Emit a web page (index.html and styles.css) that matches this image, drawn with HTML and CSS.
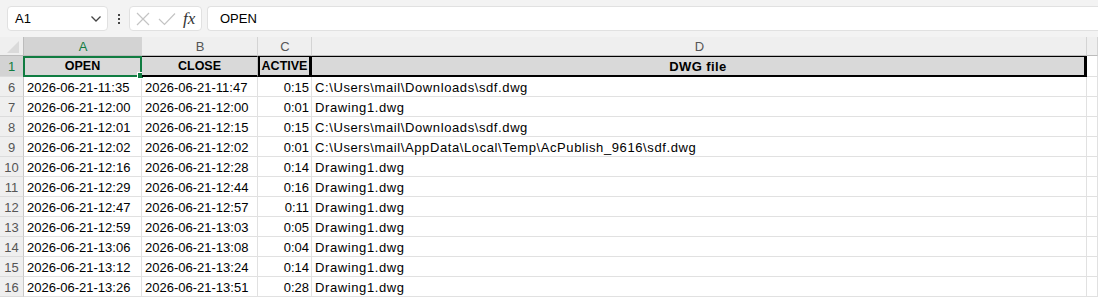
FILE: index.html
```html
<!DOCTYPE html>
<html lang="en">
<head>
    <meta charset="UTF-8">
    <title>Drawing log</title>
    <link rel="stylesheet" href="styles.css">
</head>
<body>

<div class="formula-bar">
    <div class="name-box">
        <span>A1</span>
        <svg width="12" height="8" viewBox="0 0 12 8"><path d="M1.5 1.5 L6 6 L10.5 1.5" fill="none" stroke="#444" stroke-width="1.3"/></svg>
    </div>
    <div class="dots"><i></i><i></i><i></i></div>
    <div class="fx-box">
        <svg width="16" height="16" viewBox="0 0 16 16"><path d="M2 2 L14 14 M14 2 L2 14" stroke="#c4c4c4" stroke-width="1.2"/></svg>
        <svg width="18" height="16" viewBox="0 0 18 16"><path d="M1 8 L6.5 13.5 L17 2.5" fill="none" stroke="#c4c4c4" stroke-width="1.2"/></svg>
        <span class="fx">fx</span>
    </div>
    <div class="formula-input">OPEN</div>
</div>

<div class="sheet">
    <div class="row col-head">
        <div class="corner">
            <svg width="12" height="12" viewBox="0 0 12 12"><path d="M12 0 L12 12 L0 12 Z" fill="#dadada"/></svg>
        </div>
        <div class="active-col">A</div>
        <div>B</div>
        <div>C</div>
        <div>D</div>
        <div></div>
    </div>

    <div class="row title-row">
        <div class="rh active-row">1</div>
        <div class="title a1">OPEN<span class="handle"></span></div>
        <div class="title">CLOSE</div>
        <div class="title thick">ACTIVE</div>
        <div class="title thick-r path">DWG file</div>
        <div></div>
    </div>

    <div class="row"><div class="rh">6</div><div>2026-06-21-11:35</div><div>2026-06-21-11:47</div><div class="num">0:15</div><div class="path">C:\Users\mail\Downloads\sdf.dwg</div><div></div></div>
    <div class="row"><div class="rh">7</div><div>2026-06-21-12:00</div><div>2026-06-21-12:00</div><div class="num">0:01</div><div class="path">Drawing1.dwg</div><div></div></div>
    <div class="row"><div class="rh">8</div><div>2026-06-21-12:01</div><div>2026-06-21-12:15</div><div class="num">0:15</div><div class="path">C:\Users\mail\Downloads\sdf.dwg</div><div></div></div>
    <div class="row"><div class="rh">9</div><div>2026-06-21-12:02</div><div>2026-06-21-12:02</div><div class="num">0:01</div><div class="path">C:\Users\mail\AppData\Local\Temp\AcPublish_9616\sdf.dwg</div><div></div></div>
    <div class="row"><div class="rh">10</div><div>2026-06-21-12:16</div><div>2026-06-21-12:28</div><div class="num">0:14</div><div class="path">Drawing1.dwg</div><div></div></div>
    <div class="row"><div class="rh">11</div><div>2026-06-21-12:29</div><div>2026-06-21-12:44</div><div class="num">0:16</div><div class="path">Drawing1.dwg</div><div></div></div>
    <div class="row"><div class="rh">12</div><div>2026-06-21-12:47</div><div>2026-06-21-12:57</div><div class="num">0:11</div><div class="path">Drawing1.dwg</div><div></div></div>
    <div class="row"><div class="rh">13</div><div>2026-06-21-12:59</div><div>2026-06-21-13:03</div><div class="num">0:05</div><div class="path">Drawing1.dwg</div><div></div></div>
    <div class="row"><div class="rh">14</div><div>2026-06-21-13:06</div><div>2026-06-21-13:08</div><div class="num">0:04</div><div class="path">Drawing1.dwg</div><div></div></div>
    <div class="row"><div class="rh">15</div><div>2026-06-21-13:12</div><div>2026-06-21-13:24</div><div class="num">0:14</div><div class="path">Drawing1.dwg</div><div></div></div>
    <div class="row"><div class="rh">16</div><div>2026-06-21-13:26</div><div>2026-06-21-13:51</div><div class="num">0:28</div><div class="path">Drawing1.dwg</div><div></div></div>
</div>

</body>
</html>
```

FILE: styles.css
```css
body {
    margin: 0;
    background-color: #fff;
    font-family: "Liberation Sans", Arial, sans-serif;
    font-size: 13px;
    color: #000;
    overflow: hidden;
}
.formula-bar {
    display: flex;
    align-items: center;
    height: 37px;
    padding: 0 0 0 7px;
    box-sizing: border-box;
    background-color: #f3f3f3;
}
.name-box {
    display: flex;
    align-items: center;
    justify-content: space-between;
    width: 101px;
    height: 25px;
    box-sizing: border-box;
    padding: 0 5px 0 7px;
    background-color: #fff;
    border: 1px solid #e1e1e1;
    border-radius: 4px;
    font-size: 13px;
}
.dots {
    display: flex;
    flex-direction: column;
    gap: 2px;
    width: 21px;
    align-items: center;
}
.dots i {
    width: 2px;
    height: 2px;
    background-color: #444;
}
.fx-box {
    display: flex;
    align-items: center;
    gap: 7px;
    width: 73px;
    height: 25px;
    box-sizing: border-box;
    padding: 0 0 0 5px;
    background-color: #fff;
    border: 1px solid #e1e1e1;
    border-radius: 4px;
}
.fx {
    font-family: "Liberation Serif", "Times New Roman", serif;
    font-style: italic;
    font-size: 17px;
    color: #333;
}
.formula-input {
    flex: 1;
    height: 25px;
    margin-left: 5px;
    box-sizing: border-box;
    padding: 4px 12px 0;
    background-color: #fff;
    border: 1px solid #e1e1e1;
    border-right: none;
    border-radius: 4px 0 0 4px;
}
.row {
    display: grid;
    grid-template-columns: 24px 118px 116px 54px 775px 1fr;
    height: 20px;
}
.row > div {
    box-sizing: border-box;
    border-right: 1px solid #e1e1e1;
    border-bottom: 1px solid #e1e1e1;
    padding: 3px 2px 0 3px;
    white-space: nowrap;
    overflow: hidden;
}
.row > .num {
    text-align: right;
    padding-right: 2px;
}
.row > .path {
    letter-spacing: 0.6px;
}
.row > .rh {
    background-color: #efefef;
    border-right-color: #c8c8c8;
    border-bottom-color: #dcdcdc;
    color: #555;
    text-align: center;
    padding-left: 0;
    padding-right: 0;
}
.col-head {
    height: 19px;
    background-color: #efefef;
}
.col-head > div {
    border-right-color: #d4d4d4;
    border-bottom-color: #bcbcbc;
    color: #555;
    text-align: center;
    padding-top: 2px;
}
.col-head > .corner {
    border-right-color: #bcbcbc;
    padding: 4px 4px 0 0;
    text-align: right;
}
.col-head > .active-col {
    background-color: #d3d3d3;
    color: #107c41;
}
.row > .active-row {
    background-color: #d3d3d3;
    color: #107c41;
}
.title-row {
    height: 21px;
}
.title-row > .title {
    position: relative;
    background-color: #d9d9d9;
    border-top: 1px solid #000;
    border-bottom: 2px solid #000;
    border-right-color: #bdbdbd;
    font-size: 12.5px;
    font-weight: bold;
    text-align: center;
    padding: 2px 0 0;
}
.title-row > .path {
    font-size: 13px;
    letter-spacing: 0.4px;
}
.title-row > .thick {
    border-left: 2px solid #000;
    border-right: 3px solid #000;
}
.title-row > .thick-r {
    border-right: 3px solid #000;
}
.title-row > .a1 {
    overflow: visible;
    margin-left: -1px;
    border: 2px solid #107c41;
    padding-top: 1px;
}
.handle {
    position: absolute;
    right: -4px;
    bottom: -4px;
    width: 5px;
    height: 5px;
    background-color: #107c41;
    border: 1px solid #fff;
}
```
